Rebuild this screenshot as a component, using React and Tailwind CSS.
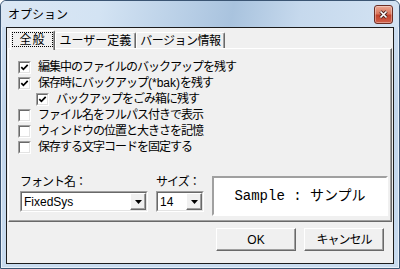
import React from "react";

const Check = ({ checked }) => (
  <span className="flex w-[13px] h-[13px] shrink-0 border border-t-[#a0a0a0] border-l-[#a0a0a0] border-b-white border-r-white">
    <span className="flex flex-1 items-center justify-center bg-white border border-t-[#696969] border-l-[#696969] border-b-[#e3e3e3] border-r-[#e3e3e3]">
      {checked && (
        <svg width="9" height="9" viewBox="0 0 9 9">
          <path d="M1.3 4.1 L3.4 6.3 L7.7 1.8" fill="none" stroke="#000" strokeWidth="1.7" />
        </svg>
      )}
    </span>
  </span>
);

const Row = ({ checked, indent, children }) => (
  <div className={`flex items-center h-[16px] gap-[7px] ${indent ? "pl-[18px]" : ""}`}>
    <Check checked={checked} />
    <span className="leading-none tracking-[-1px] whitespace-nowrap">{children}</span>
  </div>
);

const Arrow = () => (
  <span className="flex w-[16px] h-[17px] items-center justify-center bg-[#f0f0f0] border border-t-white border-l-white border-b-[#696969] border-r-[#696969] shadow-[inset_-1px_-1px_0_#a0a0a0]">
    <svg width="7" height="4" viewBox="0 0 7 4">
      <path d="M0 0 H7 L3.5 4 Z" fill="#000" />
    </svg>
  </span>
);

const Combo = ({ value, className }) => (
  <div className={`flex h-[21px] border border-t-[#a0a0a0] border-l-[#a0a0a0] border-b-white border-r-white ${className}`}>
    <div className="flex flex-1 items-center justify-between bg-white border border-t-[#696969] border-l-[#696969] border-b-[#e3e3e3] border-r-[#e3e3e3]">
      <span className="pl-[2px] leading-none">{value}</span>
      <Arrow />
    </div>
  </div>
);

const Button = ({ children, className }) => (
  <button className={`w-[80px] h-[23px] flex items-center justify-center bg-[#f0f0f0] border border-t-white border-l-white border-b-[#696969] border-r-[#696969] shadow-[inset_-1px_-1px_0_#a0a0a0] leading-none ${className}`}>
    {children}
  </button>
);

export default function App() {
  return (
    <div className="w-[400px] h-[269px] flex flex-col border border-[#3b5573] rounded-t-[6px] bg-[linear-gradient(180deg,#cfe0f2_0%,#c2d6ec_40%,#c8dbef_100%)] shadow-[inset_0_0_0_1px_rgba(255,255,255,0.6)] font-['Liberation_Sans','Noto_Sans_CJK_JP',sans-serif] text-[12px] text-black overflow-hidden">
      {/* Title bar */}
      <div className="h-[26px] flex justify-between pl-[7px] pr-[6px] rounded-t-[5px] bg-[linear-gradient(100deg,#dbe7f4_0%,#d3e3f3_25%,#b6cde5_48%,#a9c3de_58%,#c6d9ed_75%,#d3e3f3_100%)]">
        <span className="self-center leading-none font-['Noto_Sans_CJK_JP',sans-serif] text-[12px]">オプション</span>
        <div className="mt-[4px] w-[19px] h-[19px] rounded-[3px] border border-[#6b2e25] bg-[linear-gradient(180deg,#eaa893_0%,#d9765d_45%,#c2412a_55%,#d0604a_100%)] shadow-[inset_0_0_0_1px_rgba(255,255,255,0.35)] flex items-center justify-center">
          <svg width="9" height="9" viewBox="0 0 9 9">
            <path d="M1.5 1.5 L7.5 7.5 M7.5 1.5 L1.5 7.5" stroke="#4b2420" strokeWidth="3.4" />
            <path d="M1.5 1.5 L7.5 7.5 M7.5 1.5 L1.5 7.5" stroke="#fff" strokeWidth="1.6" />
          </svg>
        </div>
      </div>

      {/* Client area */}
      <div className="flex-1 mx-[5px] mb-[4px] border border-[#1c1c1c] bg-[#f0f0f0] flex flex-col">
        <div className="mx-[1px] mt-[2px] flex flex-col">
          {/* Tabs */}
          <div className="flex items-end h-[18px] relative z-10">
            <div className="ml-[2px] w-[45px] h-[20px] -mb-[2px] flex justify-center pt-[1px] bg-[#f0f0f0] rounded-t-[2px] border-t border-l border-white border-r border-r-[#696969] shadow-[inset_-1px_0_0_#a0a0a0]">
              <span className="w-[41px] h-[15px] flex items-center justify-center border border-dotted border-black leading-none tracking-[1px]">全般</span>
            </div>
            <div className="w-[81px] h-[16px] flex items-center justify-center rounded-t-[2px] border-t border-l border-white border-r border-r-[#696969] shadow-[inset_-1px_0_0_#a0a0a0] leading-none">
              ユーザー定義
            </div>
            <div className="w-[89px] h-[16px] flex items-center justify-center rounded-t-[2px] border-t border-l border-white border-r border-r-[#696969] shadow-[inset_-1px_0_0_#a0a0a0] leading-none tracking-[-0.5px]">
              バージョン情報
            </div>
          </div>

          {/* Panel */}
          <div className="h-[174px] border-t border-l border-white border-r border-b border-r-[#696969] border-b-[#696969] shadow-[inset_-1px_-1px_0_#a0a0a0] flex flex-col">
            <div className="pl-[9px] pt-[10px] flex flex-col">
              <Row checked>編集中のファイルのバックアップを残す</Row>
              <Row checked>
                保存時にバックアップ<span className="tracking-normal">(*bak)</span>を残す
              </Row>
              <Row checked indent>バックアップをごみ箱に残す</Row>
              <Row>ファイル名をフルパス付きで表示</Row>
              <Row>ウィンドウの位置と大きさを記憶</Row>
              <Row>保存する文字コードを固定する</Row>
            </div>

            <div className="flex items-start pl-[11px] mt-[21px]">
              <div className="flex flex-col w-[128px]">
                <span className="h-[12px] leading-[12px] mb-[3px] tracking-[-1px]">フォント名：</span>
                <Combo value="FixedSys" className="w-[128px]" />
              </div>
              <div className="flex flex-col ml-[8px] w-[48px]">
                <span className="h-[12px] leading-[12px] mb-[3px] tracking-[-1px]">サイズ：</span>
                <Combo value="14" className="w-[48px]" />
              </div>
              <div className="ml-[8px] w-[176px] h-[40px] flex items-center justify-center bg-white border-2 border-t-[#a0a0a0] border-l-[#a0a0a0] border-b-white border-r-white font-['Liberation_Mono','Noto_Sans_CJK_JP',monospace] text-[14px] leading-none whitespace-pre">
                Sample : サンプル
              </div>
            </div>
          </div>
        </div>

        {/* Buttons */}
        <div className="flex justify-end gap-[8px] mt-[6px] pr-[9px]">
          <Button>OK</Button>
          <Button className="tracking-[-1px]">キャンセル</Button>
        </div>
      </div>
    </div>
  );
}
